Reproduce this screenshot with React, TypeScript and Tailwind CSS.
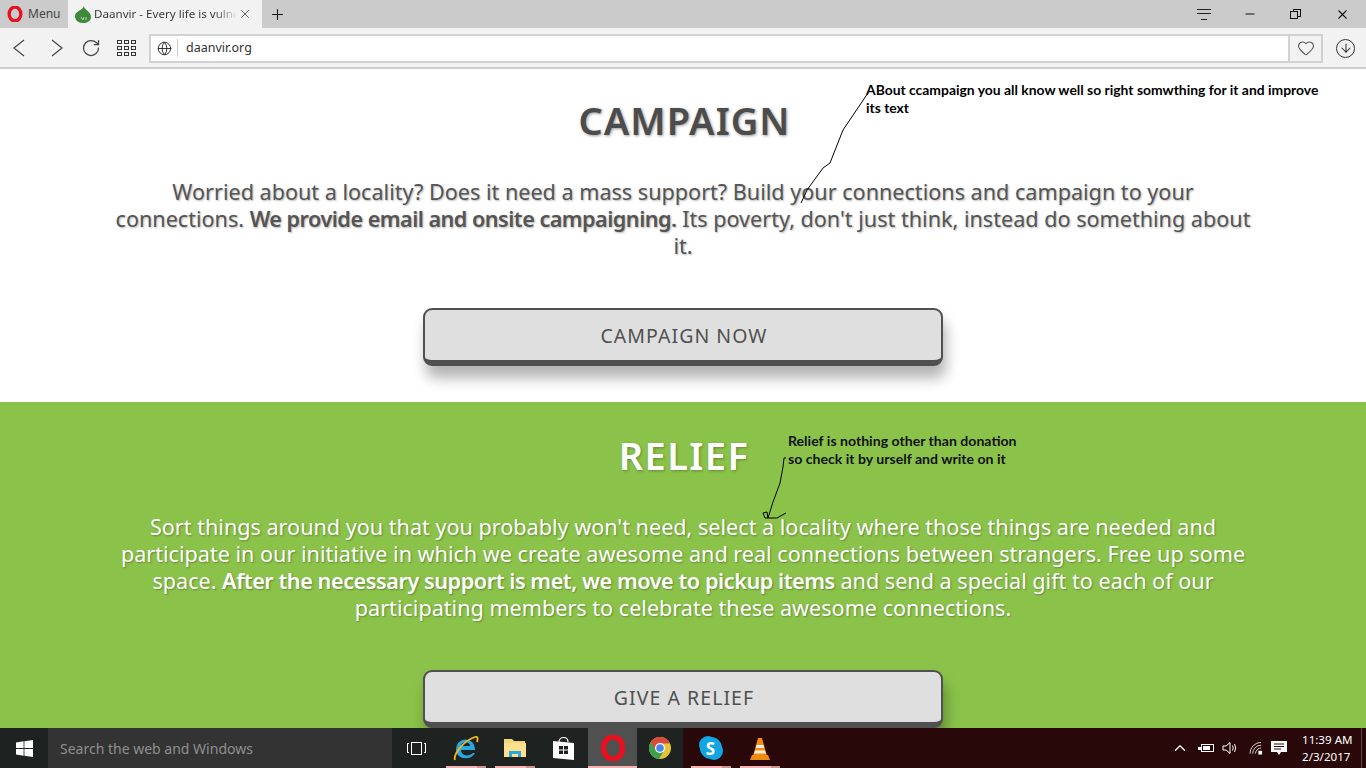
import { RotateCw, Globe, Heart, ArrowDown, Plus, X, Minus, ChevronUp } from 'lucide-react';

function OperaLogo({ size }: { size: number }) {
  return (
    <svg width={size} height={size} viewBox="0 0 24 24">
      <ellipse cx="12" cy="12" rx="8.8" ry="10.3" fill="none" stroke="#e8101f" strokeWidth="5" />
    </svg>
  );
}

function LeafIcon() {
  return (
    <svg width="17" height="17" viewBox="0 0 17 17">
      <path d="M9 0 C9 4 16 5 16 11 C16 15 12 17 8 17 C3 17 0 14 0 10 C0 5 7 5 9 0Z" fill="#3f8a3a" />
      <path d="M6 11 L8 14 L9 11 M11 11 L11 14" stroke="#cfe8c8" strokeWidth="0.8" fill="none" />
    </svg>
  );
}

function NavChevron({ flip }: { flip?: boolean }) {
  return (
    <svg width="12" height="18" viewBox="0 0 12 18" fill="none" stroke="#444" strokeWidth="1.2">
      <path d={flip ? 'M1 1 L11 9 L1 17' : 'M11 1 L1 9 L11 17'} />
    </svg>
  );
}

function AppsGrid() {
  return (
    <div className="grid grid-cols-3 gap-x-[2px] gap-y-[2px]">
      {[0, 1, 2, 3, 4, 5, 6, 7, 8].map((i) => (
        <div key={i} className="h-[4px] w-[5px] border border-[#333]" />
      ))}
    </div>
  );
}

function WinLogo() {
  return (
    <svg width="17" height="17" viewBox="0 0 17 17" fill="#fff">
      <path d="M0 2.4 L7.6 1.3 V8 H0Z M8.4 1.2 L17 0 V8 H8.4Z M0 9 H7.6 V15.7 L0 14.6Z M8.4 9 H17 V17 L8.4 15.8Z" />
    </svg>
  );
}

function IeIcon() {
  return (
    <svg width="26" height="27" viewBox="0 0 26 27">
      <path d="M3 14 A9.5 9.5 0 1 1 22 14 V15 H8 C8 21 16 22 20 18 H22 C18 26 3 25 3 14Z M8 11 H17 C17 6 8 6 8 11Z" fill="#29a8e0" fillRule="evenodd" />
      <path d="M2 25 C0 20 10 6 22 2 C25 1 25 4 24 7" fill="none" stroke="#f2b81c" strokeWidth="1.8" />
    </svg>
  );
}

function FolderIcon() {
  return (
    <svg width="22" height="20" viewBox="0 0 22 20">
      <path d="M0 1 H8 L10 3 H21 V19 H0Z" fill="#f4d67a" />
      <path d="M0 5 H22 V19 H0Z" fill="#fbe08f" />
      <path d="M5 19 V13 H17 V19 H14 V16 H8 V19Z" fill="#2ba7e0" />
    </svg>
  );
}

function StoreIcon() {
  return (
    <svg width="21" height="24" viewBox="0 0 21 24">
      <path d="M6 6 C6 0 15 0 15 6" fill="none" stroke="#fff" strokeWidth="1.2" />
      <path d="M0 5 L21 7 V24 L0 22Z" fill="#fff" />
      <path d="M6 10 H10 V13.5 H6Z M11 10 H15 V13.5 H11Z M6 14.5 H10 V18 H6Z M11 14.5 H15 V18 H11Z" fill="#1e2322" />
    </svg>
  );
}

function ChromeIcon() {
  return (
    <svg width="22" height="22" viewBox="0 0 22 22">
      <circle cx="11" cy="11" r="11" fill="#e2c33a" />
      <path d="M11 0 A11 11 0 0 0 1.5 5.5 L6.5 13 L11 6.5 H21 A11 11 0 0 0 11 0Z" fill="#d94a38" />
      <path d="M1.5 5.5 A11 11 0 0 0 10 22 L14.5 14.5 L7 13.5Z" fill="#3ea04c" />
      <circle cx="11" cy="11" r="5" fill="#fff" />
      <circle cx="11" cy="11" r="3.8" fill="#4a86e8" />
    </svg>
  );
}

function SkypeIcon() {
  return (
    <div className="flex h-[22px] w-[22px] items-center justify-center rounded-full bg-[#12a5e3] text-[17px] font-bold leading-none text-white shadow-[-3px_-3px_0_-2px_#12a5e3,3px_3px_0_-2px_#12a5e3]">
      S
    </div>
  );
}

function VlcIcon() {
  return (
    <svg width="20" height="23" viewBox="0 0 20 23">
      <path d="M2 18 H18 L20 23 H0Z" fill="#f08a10" />
      <path d="M8 1 H12 L17 19 H3Z" fill="#f58a0b" />
      <path d="M6.6 8 H13.4 L14.2 11 H5.8Z M5 13.5 H15 L15.8 16.5 H4.2Z" fill="#f3efe8" />
    </svg>
  );
}

function TaskbarApp({ children, pink }: { children: React.ReactNode; pink?: boolean }) {
  return (
    <div className="relative flex h-full w-[49px] items-center justify-center">
      {children}
      {pink && (
        <div className="absolute bottom-0 left-[5px] right-[4px] flex h-[2px] justify-end bg-[#f4b4b4]">
          <div className="h-full w-[9px] bg-[#c99494]" />
        </div>
      )}
    </div>
  );
}

export default function App() {
  return (
    <div className="flex h-screen w-full flex-col overflow-hidden bg-white font-['Noto_Sans',sans-serif]">
      {/* tab strip */}
      <div className="flex h-[28px] shrink-0 items-stretch bg-[#cbcbcb]">
        <div className="flex w-[68px] items-center pl-[7px] text-[12px] text-[#444]">
          <OperaLogo size={16} />
          <span className="ml-[5px]">Menu</span>
        </div>
        <div className="flex w-[194px] items-center bg-[#f2f2f2] pl-[7px] text-[12px]">
          <LeafIcon />
          <span className="ml-[2px] w-[141px] overflow-hidden whitespace-nowrap bg-gradient-to-r from-[#333] via-[#333] via-85% to-[#ddd] bg-clip-text text-[11.6px] text-transparent">Daanvir - Every life is vulne</span>
          <X size={14} strokeWidth={1.6} className="ml-[3px] text-[#555]" />
        </div>
        <div className="flex w-[30px] items-center justify-center">
          <Plus size={17} strokeWidth={1.5} className="text-[#111]" />
        </div>
        <div className="flex-1" />
        <div className="flex items-center">
          <div className="mr-[32px] flex w-[14px] flex-col items-center gap-[3px]">
            <div className="h-px w-[14px] bg-[#222]" />
            <div className="h-px w-[14px] bg-[#222]" />
            <div className="h-[3px] w-[6px] border-b border-[#222]" />
          </div>
          <Minus size={14} strokeWidth={1.8} className="mr-[33px] text-[#111]" />
          <div className="relative mr-[34px] h-[10px] w-[11px]">
            <div className="absolute right-0 top-0 h-[8px] w-[8px] border border-[#111]" />
            <div className="absolute bottom-0 left-0 h-[8px] w-[8px] border border-[#111] bg-[#cbcbcb]" />
          </div>
          <X size={15} strokeWidth={1.7} className="mr-[16px] text-[#111]" />
        </div>
      </div>

      {/* address bar */}
      <div className="flex h-[41px] shrink-0 items-center border-b-2 border-[#cfcfcf] bg-[#f2f2f2] pt-[1px]">
        <div className="ml-[13px]"><NavChevron /></div>
        <div className="ml-[26px]"><NavChevron flip /></div>
        <RotateCw size={20} strokeWidth={1.5} className="ml-[18px] text-[#444]" />
        <div className="ml-[16px]">
          <AppsGrid />
        </div>
        <div className="ml-[13px] flex h-[29px] w-[1174px] items-center border-2 border-[#d2d2d2] bg-white">
          <Globe size={15} strokeWidth={1.6} className="ml-[6px] text-[#333]" />
          <div className="ml-[5px] h-[18px] w-px bg-[#ccc]" />
          <span className="ml-[8px] text-[12.5px] text-[#333]">daanvir.org</span>
          <div className="ml-auto flex h-full w-[33px] items-center justify-center border-l-2 border-[#d2d2d2] bg-[#f2f2f2]">
            <Heart size={18} strokeWidth={1.4} className="text-[#555]" />
          </div>
        </div>
        <div className="ml-[13px] flex h-[19px] w-[19px] items-center justify-center rounded-full border border-[#333]">
          <ArrowDown size={14} strokeWidth={1.8} className="text-[#333]" />
        </div>
      </div>

      {/* page */}
      <div className="relative flex-1 overflow-hidden">
        <section className="flex h-[333px] flex-col items-center pt-[24px]">
          <h1 className="pl-[3px] text-[38px] font-semibold leading-[54px] tracking-[1px] text-[#4c4c4c] [text-shadow:1px_1px_3px_rgba(0,0,0,0.4)]">CAMPAIGN</h1>
          <p className="mt-[31px] w-[1150px] text-center text-[21.6px] leading-[27px] text-[#555] [text-shadow:1px_1px_2px_rgba(0,0,0,0.3)]">
            Worried about a locality? Does it need a mass support? Build your connections and campaign to your connections. <b className="font-semibold tracking-[-0.5px]">We provide email and onsite campaigning.</b> Its poverty, don't just think, instead do something about it.
          </p>
          <button className="mt-[49px] h-[58px] w-[520px] shrink-0 rounded-[9px] border-2 border-b-[6px] border-[#505050] bg-[#dfdfdf] pl-[2px] pt-[2px] text-[19.5px] tracking-[1.05px] text-[#505050] shadow-[3px_12px_14px_rgba(0,0,0,0.3)]">
            CAMPAIGN NOW
          </button>
        </section>
        <section className="flex h-[326px] flex-col items-center bg-[#8bc34a] pt-[26px]">
          <h1 className="pl-[2px] text-[38px] font-semibold leading-[54px] tracking-[1.4px] text-white [text-shadow:1px_1px_3px_rgba(0,0,0,0.3)]">RELIEF</h1>
          <p className="mt-[31px] w-[1150px] text-center text-[21.6px] leading-[27px] text-white [text-shadow:1px_1px_2px_rgba(0,0,0,0.3)]">
            Sort things around you that you probably won't need, select a locality where those things are needed and participate in our initiative in which we create awesome and real connections between strangers. Free up some space. <b className="font-semibold tracking-[-0.42px]">After the necessary support is met, we move to pickup items</b> and send a special gift to each of our participating members to celebrate these awesome connections.
          </p>
          <button className="mt-[49px] h-[58px] w-[520px] shrink-0 rounded-[9px] border-2 border-b-[6px] border-[#505050] bg-[#dfdfdf] pl-[2px] pt-[2px] text-[19.5px] tracking-[1.05px] text-[#505050] shadow-[3px_12px_14px_rgba(0,0,0,0.3)]">
            GIVE A RELIEF
          </button>
        </section>

        {/* pasted annotations */}
        <div className="absolute left-[866px] top-[12px] w-[460px] font-['Lato',sans-serif] text-[13.9px] font-bold leading-[18px] text-black">
          ABout ccampaign you all know well so right somwthing for it and improve its text
        </div>
        <svg className="absolute left-[795px] top-[14px]" width="80" height="125" viewBox="0 0 80 125" fill="none" stroke="#000">
          <path d="M73 10 L48 47 L35 80 L28 85 L12 107 L6 120" />
        </svg>
        <div className="absolute left-[788px] top-[363px] w-[240px] font-['Lato',sans-serif] text-[14.1px] font-bold leading-[18px] text-[#111]">
          Relief is nothing other than donation so check it by urself and write on it
        </div>
        <svg className="absolute left-[758px] top-[385px]" width="40" height="70" viewBox="0 0 40 70" fill="none" stroke="#000">
          <path d="M28 4 L26 4 L25 13 L22 29 L15 48 L10 64 M5 59 L7 64 L19 64 L28 59 M5 59 L9 58 L10 64" />
        </svg>
      </div>

      {/* windows taskbar */}
      <div className="flex h-[40px] shrink-0 items-stretch bg-[#1e2322] text-white">
        <div className="flex w-[48px] items-center justify-center">
          <WinLogo />
        </div>
        <div className="flex w-[344px] items-center bg-[#333333] pl-[12px] text-[14px] text-[#8f8f8f]">Search the web and Windows</div>
        <div className="flex w-[49px] items-center justify-center">
          <div className="flex items-center gap-[2px]">
            <div className="h-[10px] w-[2px] border-y border-l border-white" />
            <div className="h-[13px] w-[11px] border border-white" />
            <div className="h-[10px] w-[2px] border-y border-r border-white" />
          </div>
        </div>
        <TaskbarApp pink><IeIcon /></TaskbarApp>
        <TaskbarApp pink><FolderIcon /></TaskbarApp>
        <TaskbarApp><StoreIcon /></TaskbarApp>
        <div className="flex w-[49px] flex-col items-center justify-center border-b-2 border-[#f4b4b4] bg-[#4f5150] pt-[2px]">
          <OperaLogo size={26} />
        </div>
        <div className="flex w-[46px] items-center justify-center"><ChromeIcon /></div>
        <div className="flex flex-1 items-stretch bg-[#280808] pl-[3px]">
          <TaskbarApp pink><SkypeIcon /></TaskbarApp>
          <TaskbarApp pink><VlcIcon /></TaskbarApp>
          <div className="flex-1" />
          <div className="flex items-center">
            <ChevronUp size={18} strokeWidth={1.6} className="mr-[9px]" />
            <div className="mr-[8px] flex items-center">
              <div className="h-[3px] w-[3px] bg-white" />
              <div className="h-[8px] w-[13px] border border-white p-px"><div className="h-full w-[7px] bg-white" /></div>
            </div>
            <svg width="16" height="14" viewBox="0 0 16 14" className="mr-[11px]" fill="none" stroke="#fff">
              <path d="M1 5 H4 L8 1.5 V12.5 L4 9 H1Z M10.5 4.5 Q12 7 10.5 9.5 M12.5 3 Q15 7 12.5 11" />
            </svg>
            <svg width="14" height="14" viewBox="0 0 15 14" className="mr-[8px]" fill="none" stroke="#ddd">
              <path d="M1 13 A12 12 0 0 1 13 1 M4 13 A9 9 0 0 1 13 4 M7 13 A6 6 0 0 1 13 7" />
              <rect x="10" y="10" width="4" height="4" fill="#fff" stroke="none" />
            </svg>
            <svg width="16" height="15" viewBox="0 0 16 15" className="mr-[15px]" fill="#fff">
              <path d="M0 0 H16 V11 H10 L8 14 L6 11 H0Z" />
              <path d="M3 3 H13 M3 5.5 H13 M3 8 H10" stroke="#280808" />
            </svg>
            <div className="mr-[11px] w-[48px] whitespace-nowrap text-right text-[11.6px] leading-[17px]">
              <div>11:39 AM</div>
              <div>2/3/2017</div>
            </div>
            <div className="mr-[4px] h-full w-px bg-[#5a4a4a]" />
          </div>
        </div>
      </div>
    </div>
  );
}
